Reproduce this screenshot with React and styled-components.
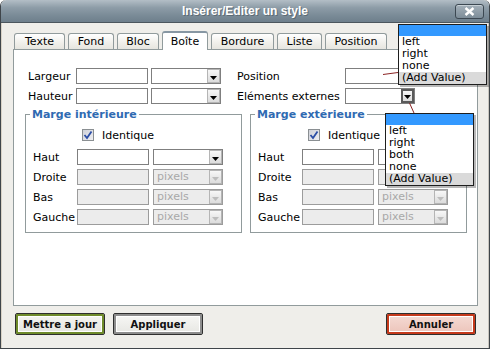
import React from "react";
import styled, { createGlobalStyle } from "styled-components";

const GlobalStyle = createGlobalStyle`
  html, body { margin: 0; padding: 0; background: #ffffff; }
  body {
    font-family: "DejaVu Sans", Verdana, sans-serif;
    font-size: 11px;
    color: #000;
  }
`;

const Window = styled.div`
  position: relative;
  box-sizing: border-box;
  width: 490px;
  height: 349px;
  border: 1px solid #3f454a;
  border-top: none;
  border-radius: 6px 6px 0 0;
  background: #efeeea;
  display: flex;
  flex-direction: column;
  overflow: hidden;
`;

const TitleBar = styled.div`
  position: relative;
  height: 22px;
  margin: 0 -1px;
  border-radius: 6px 6px 0 0;
  background: linear-gradient(#b3bec6 0%, #8d9ca7 35%, #7a8b97 70%, #6e7f8c 100%);
  border-bottom: 1px solid #4b565e;
  display: flex;
  align-items: center;
  justify-content: center;
  flex-shrink: 0;
`;

const Title = styled.span`
  font-family: "Liberation Sans", Arial, sans-serif;
  font-weight: bold;
  font-size: 12px;
  color: #ffffff;
  text-shadow: 1px 1px 0 #5d6b75;
`;

const CloseButton = styled.div`
  position: absolute;
  right: 6px;
  top: 4px;
  width: 29px;
  height: 15px;
  box-sizing: border-box;
  border: 1px solid #3c4852;
  border-radius: 3px;
  background: linear-gradient(#a4b0b9, #7d8d99);
  box-shadow: inset 0 1px 0 #c6cfd5;
  display: flex;
  align-items: center;
  justify-content: center;
`;

const Body = styled.div`
  flex: 1;
  display: flex;
  flex-direction: column;
  padding: 7px 11px 0 12px;
  box-shadow: inset 1px 0 0 #d8d2c6, inset -1px 0 0 #c9c6bf;
`;

const TabRow = styled.div`
  display: flex;
  align-items: flex-end;
  gap: 3px;
  height: 19px;
  padding-left: 1px;
`;

const Tab = styled.div`
  box-sizing: border-box;
  width: ${(p) => p.$w}px;
  height: ${(p) => (p.$active ? 19 : 16)}px;
  margin-bottom: ${(p) => (p.$active ? -1 : 0)}px;
  border: 1px solid #919b9c;
  border-bottom: none;
  border-top: ${(p) => (p.$active ? "2px solid #8797a3" : "1px solid #919b9c")};
  border-radius: 3px 3px 0 0;
  background: ${(p) => (p.$active ? "#ffffff" : "linear-gradient(#ffffff, #f0efea 60%, #e6e5df)")};
  display: flex;
  align-items: center;
  justify-content: center;
  position: relative;
  z-index: ${(p) => (p.$active ? 2 : 1)};
`;

const Panel = styled.div`
  box-sizing: border-box;
  width: 465px;
  height: 257px;
  border: 1px solid #919b9c;
  background: #ffffff;
  padding: 18px 0 0 14px;
`;

const Rows = styled.div`
  display: flex;
  flex-direction: column;
  gap: ${(p) => p.$gap}px;
`;

const Row = styled.div`
  display: flex;
  align-items: center;
  height: 16px;
`;

const Label = styled.span`
  width: ${(p) => p.$w}px;
  flex-shrink: 0;
  white-space: nowrap;
`;

const TextBox = styled.div`
  box-sizing: border-box;
  width: ${(p) => p.$w ?? 72}px;
  height: 16px;
  border: 1px solid ${(p) => (p.$disabled ? "#9c9c9c" : "#7f7f7f")};
  background: ${(p) => (p.$disabled ? "#ececec" : "#ffffff")};
  flex-shrink: 0;
`;

const Select = styled.div`
  box-sizing: border-box;
  width: ${(p) => p.$w ?? 70}px;
  height: 16px;
  margin-left: ${(p) => p.$ml ?? 4}px;
  border: 1px solid ${(p) => (p.$disabled ? "#9c9c9c" : "#7f7f7f")};
  background: ${(p) => (p.$disabled ? "#ececec" : "#ffffff")};
  display: flex;
  align-items: center;
  flex-shrink: 0;
`;

const SelectText = styled.span`
  flex: 1;
  padding-left: 3px;
  color: #a8a8a8;
  font-size: 11px;
  line-height: 14px;
`;

const ArrowBox = styled.div`
  box-sizing: border-box;
  width: 13px;
  height: 14px;
  border: ${(p) => (p.$focus ? "2px solid #5a5a5a" : "1px solid #b5b5b5")};
  background: linear-gradient(#f7f7f7, #dcdcdc);
  display: flex;
  align-items: flex-end;
  justify-content: center;
  padding-bottom: 1px;
`;

const Spacer = styled.div`
  width: ${(p) => p.$w}px;
  flex-shrink: 0;
`;

const GroupRow = styled.div`
  display: flex;
  gap: 8px;
  margin: 4px 0 0 -3px;
`;

const Group = styled.fieldset`
  box-sizing: border-box;
  width: 217px;
  margin: 0;
  padding: 0;
  min-width: 0;
  border: 1px solid #919b9c;
`;

const Legend = styled.legend`
  margin-left: 4px;
  padding: 0 2px;
  font-weight: bold;
  font-size: 11px;
  line-height: 13px;
  color: #2f6ab2;
`;

const GroupBody = styled.div`
  padding: 8px 0 7px 7px;
`;

const CheckRow = styled.div`
  display: flex;
  align-items: center;
  height: 12px;
  margin: 0 0 8px ${(p) => p.$indent}px;
  gap: 8px;
`;

const CheckBox = styled.div`
  box-sizing: border-box;
  width: 12px;
  height: 12px;
  border: 1px solid #8a8f92;
  background: linear-gradient(135deg, #cfd1d8, #eeeef2);
  display: flex;
  align-items: center;
  justify-content: center;
`;

const ButtonRow = styled.div`
  display: flex;
  margin-top: 7px;
  padding: 0 2px;
  gap: 8px;
`;

const Button = styled.div`
  box-sizing: border-box;
  width: 90px;
  height: 22px;
  border: 1px solid #2e2e2e;
  border-radius: 2px;
  box-shadow: inset 0 0 0 2px ${(p) => p.$tone}, inset 0 0 0 3px #ffffff;
  background: ${(p) => p.$bg};
  margin-left: ${(p) => (p.$right ? "auto" : "0")};
  display: flex;
  align-items: center;
  justify-content: center;
  font-weight: bold;
  font-size: 10px;
  color: #111;
`;

const DropList = styled.div`
  position: absolute;
  left: ${(p) => p.$x}px;
  top: ${(p) => p.$y}px;
  width: 89px;
  box-sizing: border-box;
  border: 1px solid #1e1e1e;
  background: #ffffff;
  box-shadow: 2px 2px 0 rgba(0, 0, 0, 0.28);
  z-index: 5;
`;

const DropItem = styled.div`
  height: ${(p) => (p.$selected ? 11 : 12)}px;
  line-height: 12px;
  padding-left: 3px;
  background: ${(p) => (p.$selected ? "#3399ff" : p.$muted ? "#dadada" : "transparent")};
  white-space: nowrap;
`;

const Leaders = styled.svg`
  position: absolute;
  left: 0;
  top: 0;
  z-index: 4;
  pointer-events: none;
`;

const tabs = [
  { name: "Texte", w: 51 },
  { name: "Fond", w: 46 },
  { name: "Bloc", w: 42 },
  { name: "Boîte", w: 46, active: true },
  { name: "Bordure", w: 63 },
  { name: "Liste", w: 45 },
  { name: "Position", w: 62 },
];

function Arrow({ disabled }) {
  return (
    <svg width="7" height="5" viewBox="0 0 7 5">
      <path d="M0 0 H7 L3.5 4 Z" fill={disabled ? "#bdbdbd" : "#000"} />
    </svg>
  );
}

function DropSelect({ disabled, text, w, ml, focus }) {
  return (
    <Select $disabled={disabled} $w={w} $ml={ml}>
      <SelectText>{text}</SelectText>
      <ArrowBox $focus={focus}>
        <Arrow disabled={disabled} />
      </ArrowBox>
    </Select>
  );
}

// the right group is half covered by the open list, so its "pixels" labels stay hidden there
function MarginGroup({ title, indent, covered }) {
  const sides = ["Haut", "Droite", "Bas", "Gauche"];
  return (
    <Group>
      <Legend>{title}</Legend>
      <GroupBody>
        <CheckRow $indent={indent}>
          <CheckBox>
            <svg width="10" height="10" viewBox="0 0 10 10">
              <path d="M1.5 5 L4 8 L8.5 1.5" stroke="#2c4ea6" strokeWidth="1.8" fill="none" />
            </svg>
          </CheckBox>
          <span>Identique</span>
        </CheckRow>
        <Rows $gap={4}>
          {sides.map((side, i) => (
            <Row key={side}>
              <Label $w={44}>{side}</Label>
              <TextBox $disabled={i > 0} />
              <DropSelect
                disabled={i > 0}
                text={i > 0 && !(covered && i < 2) ? "pixels" : ""}
              />
            </Row>
          ))}
        </Rows>
      </GroupBody>
    </Group>
  );
}

export default function App() {
  return (
    <>
      <GlobalStyle />
      <Window>
        <TitleBar>
          <Title>Insérer/Editer un style</Title>
          <CloseButton>
            <svg width="11" height="9" viewBox="0 0 11 9">
              <path d="M1.5 1 L9.5 8 M9.5 1 L1.5 8" stroke="#ffffff" strokeWidth="2.4" />
            </svg>
          </CloseButton>
        </TitleBar>
        <Body>
          <TabRow>
            {tabs.map((t) => (
              <Tab key={t.name} $w={t.w} $active={t.active}>
                {t.name}
              </Tab>
            ))}
          </TabRow>
          <Panel>
            <Rows $gap={4}>
              <Row>
                <Label $w={48}>Largeur</Label>
                <TextBox />
                <DropSelect ml={3} />
                <Spacer $w={16} />
                <Label $w={108}>Position</Label>
                <TextBox $w={70} />
              </Row>
              <Row>
                <Label $w={48}>Hauteur</Label>
                <TextBox />
                <DropSelect ml={3} />
                <Spacer $w={16} />
                <Label $w={108}>Eléments externes</Label>
                <DropSelect ml={0} focus />
              </Row>
            </Rows>
            <GroupRow>
              <MarginGroup title="Marge intérieure" indent={49} />
              <MarginGroup title="Marge extérieure" indent={50} covered />
            </GroupRow>
          </Panel>
          <ButtonRow>
            <Button $tone="#6f8b2b" $bg="linear-gradient(#f6f6f2, #e4e4de)">Mettre a jour</Button>
            <Button $tone="#8d8d8d" $bg="linear-gradient(#f8f8f6, #e6e6e2)">Appliquer</Button>
            <Button $right $tone="#c5391b" $bg="linear-gradient(#f6dcd5, #ecc3b9)">Annuler</Button>
          </ButtonRow>
        </Body>

        <Leaders width="490" height="349">
          <line x1="382" y1="74.5" x2="397" y2="72.5" stroke="#8b2323" strokeWidth="1" />
          <line x1="408.5" y1="103" x2="413" y2="113" stroke="#8b2323" strokeWidth="1" />
        </Leaders>

        <DropList $x={397} $y={24}>
          <DropItem $selected />
          <DropItem>left</DropItem>
          <DropItem>right</DropItem>
          <DropItem>none</DropItem>
          <DropItem $muted>(Add Value)</DropItem>
        </DropList>

        <DropList $x={384} $y={113}>
          <DropItem $selected />
          <DropItem>left</DropItem>
          <DropItem>right</DropItem>
          <DropItem>both</DropItem>
          <DropItem>none</DropItem>
          <DropItem $muted>(Add Value)</DropItem>
        </DropList>
      </Window>
    </>
  );
}
